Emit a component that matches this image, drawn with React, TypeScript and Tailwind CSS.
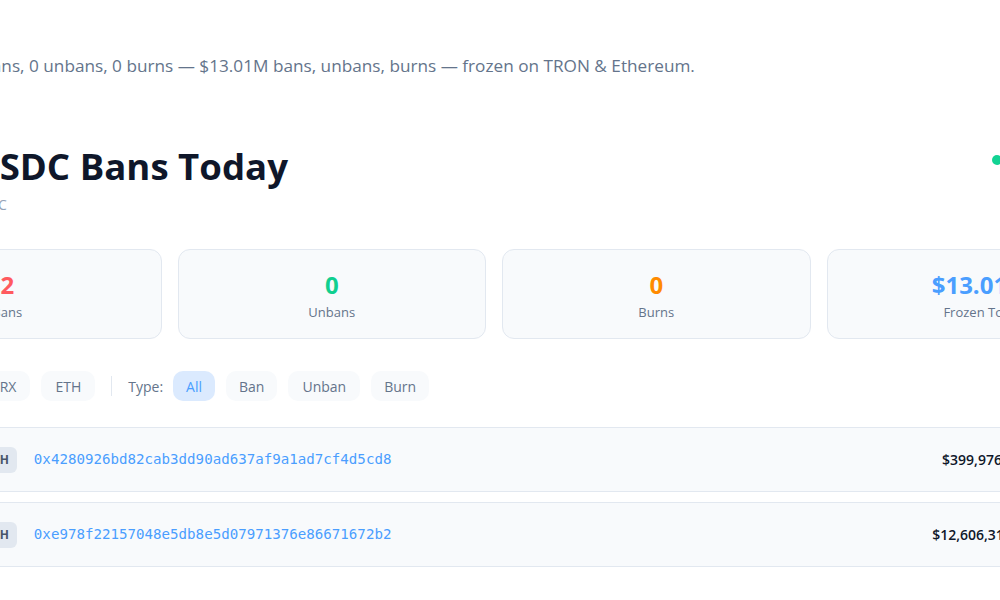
import React from "react";

const stats = [
  { value: "2", label: "Bans", color: "text-[#ff5a5f]" },
  { value: "0", label: "Unbans", color: "text-[#10cf8f]" },
  { value: "0", label: "Burns", color: "text-[#ff8a00]" },
  { value: "$13.01M", label: "Frozen Total", color: "text-[#4a9eff]" },
];

const rows = [
  { addr: "0x4280926bd82cab3dd90ad637af9a1ad7cf4d5cd8", amount: "$399,976", time: "09:14 UTC" },
  { addr: "0xe978f22157048e5db8e5d07971376e86671672b2", amount: "$12,606,318", time: "03:52 UTC" },
];

export default function App() {
  return (
    <div
      className="w-[1000px] h-[600px] overflow-hidden bg-white"
      style={{ fontFamily: '"Open Sans", "Noto Sans", Arial, sans-serif' }}
    >
      <div className="ml-[-147px] w-[1282px]">
        <p className="pt-[54px] pl-[114px] text-[17.2px] leading-6 text-[#64748b] whitespace-nowrap">
          2 bans, 0 unbans, 0 burns — $13.01M bans, unbans, burns — frozen on TRON &amp; Ethereum.
        </p>

        <div className="mt-[66px] flex items-start pl-[119px]">
          <div className="w-[1020px]">
            <h1 className="text-[36.6px] leading-[44px] font-bold text-[#0f172a] whitespace-nowrap">
              USDC Bans Today
            </h1>
            <div className="mt-[7px] text-[14px] leading-5 text-[#94a3b8] whitespace-nowrap pl-[8px]">
              UTC
            </div>
          </div>
          <div className="mt-[5px] flex items-center gap-2 whitespace-nowrap">
            <span className="block w-[10px] h-[10px] rounded-full bg-[#12d393]"></span>
            <span className="text-[14px] text-[#64748b]">Live</span>
          </div>
        </div>

        <div className="mt-[34px] grid grid-cols-4 gap-4">
          {stats.map((s) => (
            <div
              key={s.label}
              className="h-[90px] pt-[2px] rounded-xl border border-[#e2e8f0] bg-[#f8fafc] flex flex-col items-center justify-center"
            >
              <div className={`text-[24px] leading-8 font-bold ${s.color}`}>{s.value}</div>
              <div className="mt-[2px] text-[13px] leading-[18px] text-[#64748b]">{s.label}</div>
            </div>
          ))}
        </div>

        <div className="mt-[32px] flex items-center gap-[11px] pl-[125px] text-[14px]">
          <button className="h-[30px] px-[14px] rounded-[10px] bg-[#f8fafc] text-[#64748b]">TRX</button>
          <button className="h-[30px] px-[14px] rounded-[10px] bg-[#f8fafc] text-[#64748b]">ETH</button>
          <span className="mx-[5px] w-px h-[20px] bg-[#e2e8f0]"></span>
          <span className="mr-[-1px] text-[#64748b]">Type:</span>
          <button className="h-[30px] px-[13px] rounded-[10px] bg-[#dbeafe] text-[#4a9eff]">All</button>
          <button className="h-[30px] px-[13px] rounded-[10px] bg-[#f8fafc] text-[#64748b]">Ban</button>
          <button className="h-[30px] px-[14px] rounded-[10px] bg-[#f8fafc] text-[#64748b]">Unban</button>
          <button className="h-[30px] px-[13px] rounded-[10px] bg-[#f8fafc] text-[#64748b]">Burn</button>
        </div>

        <div className="mt-[26px] flex flex-col gap-[10px]">
          {rows.map((r) => (
            <div
              key={r.addr}
              className="h-[65px] rounded-[10px] border border-[#e2e8f0] bg-[#f8fafc] flex items-center pl-[124px] pr-[18px]"
            >
              <span className="h-[26px] px-2 rounded-md bg-[#e2e8f0] text-[#475569] text-[12px] font-bold flex items-center">
                ETH
              </span>
              <span
                className="ml-[17px] flex-1 text-[14.15px] text-[#4a9eff] whitespace-nowrap"
                style={{ fontFamily: '"DejaVu Sans Mono", monospace' }}
              >
                {r.addr}
              </span>
              <span className="w-[120px] text-center text-[14px] font-semibold text-[#0f172a] whitespace-nowrap">
                {r.amount}
              </span>
              <span className="w-[84px] text-right text-[12px] text-[#94a3b8] whitespace-nowrap">{r.time}</span>
            </div>
          ))}
        </div>
      </div>
    </div>
  );
}
